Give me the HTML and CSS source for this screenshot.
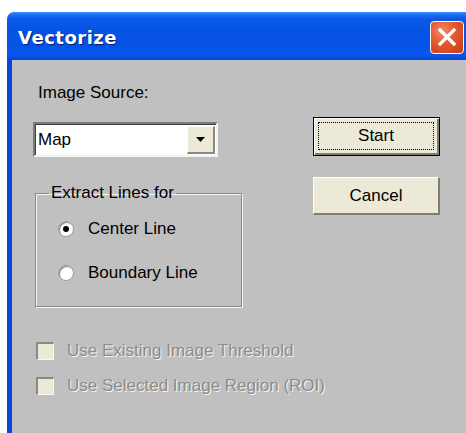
FILE: index.html
```html
<!DOCTYPE html>
<html>
<head>
<meta charset="utf-8">
<title>Vectorize</title>
<link rel="stylesheet" href="styles.css">
</head>
<body>
<div class="window">
  <div class="titlebar">
    <span class="title">Vectorize</span>
    <button class="close" aria-label="Close">
      <svg width="20" height="20" viewBox="0 0 20 20"><path d="M3 3 L17 17 M17 3 L3 17" stroke="#fff" stroke-width="3.2" stroke-linecap="square"/></svg>
    </button>
  </div>
  <div class="client">
    <div class="top">
      <div class="left">
        <div class="label">Image Source:</div>
        <div class="combo">
          <span class="combo-text">Map</span>
          <span class="combo-btn">
            <svg width="9" height="5" viewBox="0 0 9 5"><path d="M0 0 H9 L4.5 5 Z" fill="#000"/></svg>
          </span>
        </div>
        <fieldset class="group">
          <legend>Extract Lines for</legend>
          <label class="radio-row"><span class="radio checked"></span>Center Line</label>
          <label class="radio-row"><span class="radio"></span>Boundary Line</label>
        </fieldset>
      </div>
      <div class="right">
        <button class="btn default"><span class="focus">Start</span></button>
        <button class="btn">Cancel</button>
      </div>
    </div>
    <div class="checks">
      <div class="check-row"><span class="checkbox"></span><span class="disabled">Use Existing Image Threshold</span></div>
      <div class="check-row"><span class="checkbox"></span><span class="disabled">Use Selected Image Region (ROI)</span></div>
    </div>
  </div>
</div>
</body>
</html>
```
FILE: styles.css
```css
html, body {
  margin: 0;
  padding: 0;
  background: #fff;
}

body {
  font-family: "Liberation Sans", Arial, sans-serif;
  font-size: 17px;
  color: #000;
}

.window {
  margin: 12px 0 0 7px;
  height: 421px;
  display: flex;
  flex-direction: column;
}

.titlebar {
  height: 48px;
  flex: none;
  display: flex;
  align-items: center;
  justify-content: space-between;
  padding: 0 2px 0 11px;
  border-radius: 7px 0 0 0;
  background: linear-gradient(to bottom,
    #3a8cff 0%, #1f6df3 6%, #0a5ae8 14%, #0553e4 40%, #0552e6 70%, #0a58ee 88%, #0546d0 100%);
}

.title {
  color: #fff;
  font-family: "DejaVu Sans", sans-serif;
  font-weight: bold;
  font-size: 18px;
  letter-spacing: 0.5px;
  text-shadow: 1px 1px 1px #0a1e7a;
  margin-top: 2px;
}

.close {
  width: 34px;
  height: 33px;
  margin-top: 2px;
  padding: 0;
  border: 1px solid #fff;
  border-radius: 4px;
  background: radial-gradient(circle at 35% 30%, #f08a66 0%, #e2582f 45%, #c83b12 100%);
  display: flex;
  align-items: center;
  justify-content: center;
}

.client {
  flex: 1;
  background: #c0c0c0;
  border-left: 5px solid #0b46d8;
  padding: 0 0 0 23px;
}

.top {
  display: flex;
}

.left {
  width: 208px;
}

.label {
  margin-top: 24px;
  line-height: 18px;
  padding-left: 3px;
}

.combo {
  margin-top: 20px;
  width: 185px;
  height: 35px;
  box-sizing: border-box;
  background: #fff;
  border-top: 2px solid #7a7a7a;
  border-left: 2px solid #7a7a7a;
  border-right: 2px solid #f4f4f4;
  border-bottom: 2px solid #f4f4f4;
  box-shadow: inset 1px 1px 0 #404040;
  display: flex;
  align-items: center;
  justify-content: space-between;
  padding: 0 1px 0 3px;
  margin-left: -2px;
}

.combo-btn {
  width: 28px;
  height: 28px;
  box-sizing: border-box;
  background: #ece9d8;
  border-top: 1px solid #fff;
  border-left: 1px solid #fff;
  border-right: 2px solid #8a8a7a;
  border-bottom: 2px solid #8a8a7a;
  display: flex;
  align-items: center;
  justify-content: center;
}

.group {
  margin: 26px 0 0 0;
  padding: 2px 0 16px 22px;
  width: 207px;
  height: 124px;
  box-sizing: border-box;
  border: 1px solid #8a8a8a;
  box-shadow: 1px 1px 0 #f4f4f4, inset 1px 1px 0 #f4f4f4;
  min-width: 0;
}

.group legend {
  padding: 0 2px;
  margin-left: -9px;
  line-height: 20px;
}

.radio-row {
  display: flex;
  align-items: center;
  height: 22px;
  margin-top: 13px;
}

.radio-row + .radio-row {
  margin-top: 22px;
}

.radio {
  width: 16px;
  height: 16px;
  box-sizing: border-box;
  border-radius: 50%;
  background: radial-gradient(circle at 60% 60%, #fff 0%, #fff 45%, #e6e3d6 100%);
  border: 1px solid #a0a090;
  box-shadow: inset 1px 1px 0 #8a8a80;
  margin-right: 14px;
  display: flex;
  align-items: center;
  justify-content: center;
}

.radio.checked::after {
  content: "";
  width: 6px;
  height: 6px;
  border-radius: 50%;
  background: #000;
}

.right {
  margin-left: 70px;
  margin-top: 57px;
  display: flex;
  flex-direction: column;
}

.btn {
  width: 127px;
  height: 38px;
  box-sizing: border-box;
  font-family: "Liberation Sans", Arial, sans-serif;
  font-size: 17px;
  color: #000;
  background: #ece9d8;
  border-top: 1px solid #fff;
  border-left: 1px solid #fff;
  border-right: 2px solid #7f7f70;
  border-bottom: 2px solid #7f7f70;
  padding: 0;
  display: flex;
  align-items: center;
  justify-content: center;
}

.btn + .btn {
  margin-top: 21px;
}

.btn.default {
  height: 39px;
  border: 1px solid #000;
  box-shadow: inset 1px 1px 0 #fff, inset -2px -2px 0 #7f7f70;
  padding: 4px 5px 5px 4px;
}

.focus {
  width: 100%;
  height: 100%;
  box-sizing: border-box;
  border: 1px dotted #000;
  display: flex;
  align-items: center;
  justify-content: center;
}

.checks {
  margin-top: 34px;
}

.check-row {
  display: flex;
  align-items: center;
  height: 20px;
  margin-left: 1px;
}

.check-row + .check-row {
  margin-top: 15px;
}

.checkbox {
  width: 18px;
  height: 18px;
  box-sizing: border-box;
  background: #ece9d8;
  border-top: 2px solid #8a8a80;
  border-left: 2px solid #8a8a80;
  border-right: 1px solid #f8f8f0;
  border-bottom: 1px solid #f8f8f0;
  margin-right: 13px;
}

.disabled {
  color: #8c8c8c;
  text-shadow: 1px 1px 0 #f4f4f4;
}
```
